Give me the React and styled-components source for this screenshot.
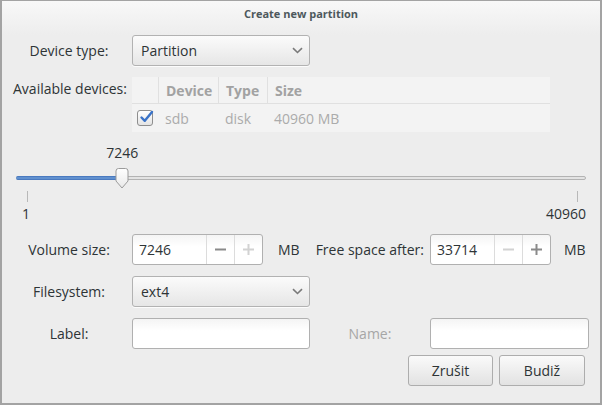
import React from "react";
import styled, { createGlobalStyle } from "styled-components";

const Global = createGlobalStyle`
  html, body { margin: 0; padding: 0; background: #ededed; }
  body { font-family: "Open Sans", "Noto Sans", "DejaVu Sans", sans-serif; font-size: 14px; color: #2e3436; }
  * { box-sizing: border-box; }
`

const Window = styled.div`
  width: 602px;
  height: 405px;
  display: flex;
  flex-direction: column;
  background: linear-gradient(#f8f8f8 0px, #ededed 34px, #ededed 100%);
  border: 2px solid #a3a3a3;
  border-top-width: 1px;
  overflow: hidden;
`

const TitleBar = styled.div`
  height: 24px;
  display: flex;
  align-items: center;
  justify-content: center;
  font-weight: 700;
  font-size: 11px;
  color: #4d585c;
`

const Row = styled.div`
  display: flex;
  align-items: ${p => p.$align || "center"};
  height: ${p => p.$h || 30}px;
  margin-top: ${p => p.$mt || 0}px;
  padding-left: 11px;
  padding-right: ${p => p.$pr || 0}px;
  justify-content: ${p => p.$justify || "flex-start"};
`

const Label = styled.div`
  width: ${p => p.$w || 112}px;
  margin-right: ${p => p.$mr ?? 7}px;
  text-align: center;
  line-height: ${p => p.$lh ? p.$lh + "px" : "normal"};
  color: ${p => p.$dim ? "#a6a6a6" : "#2e3436"};
  white-space: nowrap;
`

const Combo = styled.div`
  width: 178px;
  height: 31px;
  border: 1px solid #b2b2b2;
  border-radius: 3px;
  background: linear-gradient(#fbfbfb, #e6e6e6);
  display: flex;
  align-items: center;
  justify-content: space-between;
  padding: 0 6px 0 8px;
  box-shadow: 0 1px 0 rgba(255,255,255,0.8);
`

const Entry = styled.div`
  width: ${p => p.$w || 178}px;
  height: 31px;
  border: 1px solid ${p => p.$off ? "#c3c3c3" : "#b0b0b0"};
  border-radius: 3px;
  background: ${p => p.$off ? "#f0f0f0" : "linear-gradient(#f4f4f4, #ffffff 40%)"};
`

const Table = styled.div`
  width: 418px;
  height: 55px;
  background: #f3f3f3;
  display: grid;
  grid-template-columns: 26px 60px 49px 1fr;
  grid-template-rows: 27px 28px;
`

const Cell = styled.div`
  display: flex;
  align-items: center;
  padding-left: ${p => p.$center ? 0 : 7}px;
  justify-content: ${p => p.$center ? "center" : "flex-start"};
  border-left: ${p => p.$sep ? "1px solid #e0e0e0" : "none"};
  border-bottom: ${p => p.$head ? "1px solid #e0e0e0" : "none"};
  font-weight: ${p => p.$head ? 700 : 400};
  color: ${p => p.$head ? "#a2a2a2" : "#ababab"};
`

const Check = styled.div`
  width: 16px;
  height: 16px;
  border: 1px solid #8e8e8e;
  border-radius: 3px;
  background: linear-gradient(#ffffff, #e4e4e4);
  position: relative;
  svg { position: absolute; left: 1px; top: -1px; }
`

const SliderBlock = styled.div`
  position: relative;
  margin: 13px 14px 0 14px;
  height: 76px;
`

const Value = styled.div`
  position: absolute;
  top: 0;
  transform: translateX(-50%);
  line-height: 16px;
`

const Trough = styled.div`
  position: absolute;
  top: 31px;
  left: 0;
  right: 0;
  height: 4px;
  border-radius: 2px;
  background: #e3e3e3;
  border: 1px solid #b3b3b3;
`

const Fill = styled.div`
  position: absolute;
  top: 31px;
  left: 0;
  height: 4px;
  border-radius: 2px;
  background: linear-gradient(#3f6fb8, #6b9bd6 50%, #3f6fb8);
`

const Knob = styled.svg`
  position: absolute;
  top: 23px;
  transform: translateX(-50%);
`

const Tick = styled.div`
  position: absolute;
  top: 46px;
  width: 1px;
  height: 11px;
  background: #b8b8b8;
`

const Marks = styled.div`
  position: absolute;
  top: 61px;
  left: 0;
  right: 0;
  display: flex;
  justify-content: space-between;
  line-height: 16px;
  padding-left: 6px;
`

const Spin = styled.div`
  width: ${p => p.$w}px;
  height: 31px;
  border: 1px solid #b0b0b0;
  border-radius: 3px;
  background: linear-gradient(#f4f4f4, #ffffff 40%);
  display: flex;
  margin-left: ${p => p.$ml || 0}px;
`

const SpinText = styled.div`
  flex: 1;
  display: flex;
  align-items: center;
  padding-left: 6px;
`

const SpinBtn = styled.div`
  width: 28px;
  border-left: 1px solid #dcdcdc;
  display: flex;
  align-items: center;
  justify-content: center;
`

const Unit = styled.div`
  margin-left: ${p => p.$ml}px;
`

const Button = styled.div`
  width: ${p => p.$w}px;
  height: 31px;
  border: 1px solid #adadad;
  border-radius: 3px;
  background: linear-gradient(#fafafa, #e2e2e2);
  display: flex;
  align-items: center;
  justify-content: center;
  margin-left: ${p => p.$ml || 0}px;
`

const Chevron = () => (
  <svg width="11" height="7" viewBox="0 0 11 7">
    <path d="M1 1.2 L5.5 5.5 L10 1.2" fill="none" stroke="#7a7a7a" strokeWidth="1.6" />
  </svg>
)

const Minus = ({ c }) => (
  <svg width="11" height="11" viewBox="0 0 11 11">
    <rect x="0" y="4.5" width="11" height="2" fill={c} />
  </svg>
)

const Plus = ({ c }) => (
  <svg width="11" height="11" viewBox="0 0 11 11">
    <rect x="0" y="4.5" width="11" height="2" fill={c} />
    <rect x="4.5" y="0" width="2" height="11" fill={c} />
  </svg>
)

const MIN = 1
const MAX = 40960
const VAL = 7246

export default function App() {
  const width = 570
  const inset = 8.5
  const x = inset + ((VAL - MIN) / (MAX - MIN)) * (width - inset * 2)
  return (
    <>
      <Global />
      <Window>
        <TitleBar>Create new partition</TitleBar>

        <Row $mt={10} $h={31}>
          <Label>Device type:</Label>
          <Combo>
            <span>Partition</span>
            <Chevron />
          </Combo>
        </Row>

        <Row $mt={11} $h={55} $align="flex-start">
          <Label $lh={24}>Available devices:</Label>
          <Table>
            <Cell $head />
            <Cell $head $sep>Device</Cell>
            <Cell $head $sep>Type</Cell>
            <Cell $head $sep>Size</Cell>
            <Cell $center>
              <Check>
                <svg width="15" height="14" viewBox="0 0 15 14">
                  <path d="M2.5 7.5 L5.8 10.8 L13 2" fill="none" stroke="#3a73c8" strokeWidth="2.4" strokeLinecap="round" strokeLinejoin="round" />
                </svg>
              </Check>
            </Cell>
            <Cell>sdb</Cell>
            <Cell>disk</Cell>
            <Cell>40960 MB</Cell>
          </Table>
        </Row>

        <SliderBlock>
          <Value style={{ left: x }}>7246</Value>
          <Trough />
          <Fill style={{ width: x }} />
          <Knob style={{ left: x }} width="15" height="21" viewBox="0 0 15 21">
            <defs>
              <linearGradient id="kg" x1="0" y1="0" x2="0" y2="1">
                <stop offset="0" stopColor="#ffffff" />
                <stop offset="1" stopColor="#e9e9e9" />
              </linearGradient>
            </defs>
            <path d="M1.5 3 Q1.5 0.5 4 0.5 H11 Q13.5 0.5 13.5 3 V13 L7.5 20 L1.5 13 Z" fill="url(#kg)" stroke="#9b9b9b" />
          </Knob>
          <Tick style={{ left: inset + 2 }} />
          <Tick style={{ left: width - inset - 1 }} />
          <Marks>
            <span>1</span>
            <span>40960</span>
          </Marks>
        </SliderBlock>

        <Row $mt={13} $h={31}>
          <Label>Volume size:</Label>
          <Spin $w={131}>
            <SpinText>7246</SpinText>
            <SpinBtn><Minus c="#8a8a8a" /></SpinBtn>
            <SpinBtn><Plus c="#d2d2d2" /></SpinBtn>
          </Spin>
          <Unit $ml={15}>MB</Unit>
          <Unit $ml={16}>Free space after:</Unit>
          <Spin $w={121} $ml={6}>
            <SpinText>33714</SpinText>
            <SpinBtn><Minus c="#d2d2d2" /></SpinBtn>
            <SpinBtn><Plus c="#8a8a8a" /></SpinBtn>
          </Spin>
          <Unit $ml={13}>MB</Unit>
        </Row>

        <Row $mt={11} $h={31}>
          <Label>Filesystem:</Label>
          <Combo>
            <span>ext4</span>
            <Chevron />
          </Combo>
        </Row>

        <Row $mt={11} $h={31}>
          <Label>Label:</Label>
          <Entry />
          <Label $dim $w={120} $mr={0}>Name:</Label>
          <Entry $w={159} />
        </Row>

        <Row $mt={6} $h={31} $justify="flex-end" $pr={15}>
          <Button $w={85}>Zrušit</Button>
          <Button $w={86} $ml={6}>Budiž</Button>
        </Row>
      </Window>
    </>
  )
}
